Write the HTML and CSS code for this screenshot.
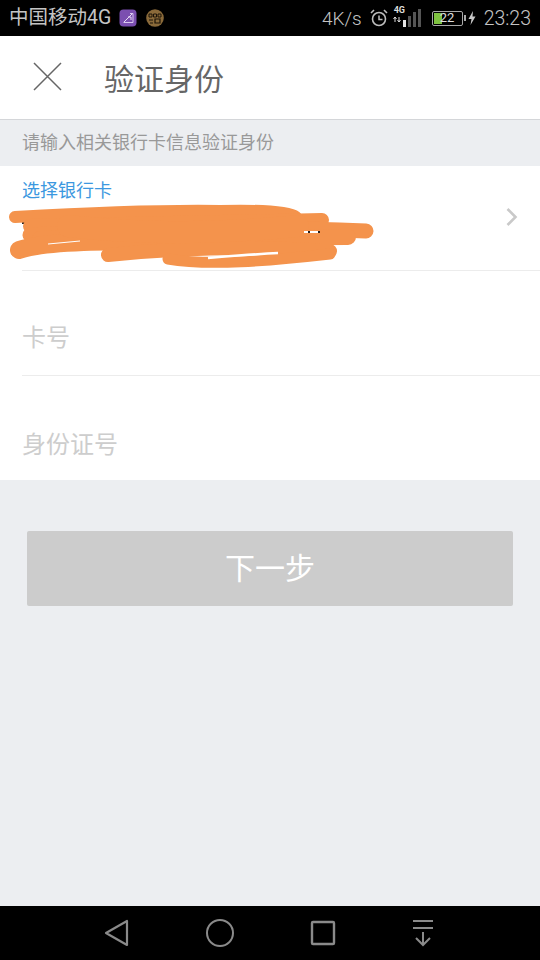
FILE: index.html
```html
<!DOCTYPE html>
<html lang="zh">
<head>
<meta charset="utf-8">
<title>验证身份</title>
<link rel="stylesheet" href="styles.css">
</head>
<body>
<div class="phone">
  <header class="status">
    <div class="status-left">
      <span class="carrier">中国移动4G</span>
      <svg class="app-icon" width="18" height="18" viewBox="0 0 18 18"><rect x="0.500" y="0.500" width="17" height="17" rx="4" fill="#7b4fb0"/><path d="M11 4.500H14V13.500H4.500" fill="none" stroke="#d9c8ee" stroke-width="1"/><path d="M5 13L13 5M9 8h3v3" fill="none" stroke="#e8dcf5" stroke-width="1"/></svg>
      <svg class="app-icon second" width="18" height="18" viewBox="0 0 18 18"><circle cx="9" cy="9" r="8.800" fill="#8a6a3a"/><path d="M3 5h3v3H3zM7.500 5h3v3h-3zM12 5h3v3h-3z" fill="none" stroke="#1d1408" stroke-width="1"/><path d="M3 11h4M9 10h5v4H9zM4 14h3" fill="none" stroke="#1d1408" stroke-width="1.200"/></svg>
    </div>
    <div class="status-right">
      <span class="speed">4K/s</span>
      <svg width="20" height="20" viewBox="0 0 20 20" class="alarm"><circle cx="10" cy="11" r="6.500" fill="none" stroke="#bdbdbd" stroke-width="1.600"/><path d="M10 7.500V11.500H13.500" fill="none" stroke="#bdbdbd" stroke-width="1.500"/><path d="M2 5L5 2M18 5L15 2" stroke="#bdbdbd" stroke-width="1.600"/></svg>
      <div class="signal">
        <span class="net">4G</span>
        <svg width="30" height="20" viewBox="0 0 30 20"><path d="M2 9L2 14M0.500 11L2 9L3.500 11M6 9V14M4.500 12L6 14L7.500 12" stroke="#ddd" stroke-width="1" fill="none"/><rect x="10" y="12" width="3" height="7" fill="#e6e6e6"/><rect x="15" y="8" width="3" height="11" fill="#555"/><rect x="20" y="4" width="3" height="15" fill="#555"/><rect x="25" y="1" width="3" height="18" fill="#555"/></svg>
      </div>
      <div class="battery">
        <span class="battery-fill"></span>
        <span class="battery-text">22</span>
      </div>
      <svg class="bolt" width="8" height="14" viewBox="0 0 8 14"><path d="M5 0L0.500 8H3.500L2.500 14L7.500 5.500H4.500Z" fill="#c8c8c8"/></svg>
      <span class="clock">23:23</span>
    </div>
  </header>

  <div class="titlebar">
    <svg class="close" width="30" height="30" viewBox="0 0 30 30"><path d="M2 2L29 29M29 2L2 29" stroke="#666" stroke-width="1.500"/></svg>
    <h1 class="title">验证身份</h1>
  </div>

  <p class="hint">请输入相关银行卡信息验证身份</p>

  <section class="form">
    <div class="row bank-row">
      <span class="bank-label">选择银行卡</span>
      <svg class="chevron" width="14" height="20" viewBox="0 0 14 20"><path d="M2.500 2L10.500 10L2.500 18" fill="none" stroke="#c9c9c9" stroke-width="2.600"/></svg>
      <svg class="scribble" width="370" height="66" viewBox="0 0 370 66"><path d="M14 19h10" stroke="#222" stroke-width="2"/><g fill="none" stroke="#f4934c" stroke-linecap="round" stroke-linejoin="round"><path d="M7 13C80 9 150 6 212 7C250 6 280 7 288 13" stroke-width="12"/><path d="M22 22L314 16" stroke-width="14"/><path d="M22 31C120 25 250 22 358 27" stroke-width="15"/><path d="M32 35L340 33" stroke-width="16"/><path d="M11 46C40 36 120 37 170 37" stroke-width="18"/><path d="M100 51C170 44 250 42 322 47" stroke-width="14"/><path d="M160 55C200 62 260 57 322 50" stroke-width="11"/><path d="M60 22C130 30 210 30 290 22" stroke-width="22"/></g><path d="M200 54C225 52 250 50 270 49" fill="none" stroke="#fff" stroke-width="2.500"/><path d="M296 28H312" stroke="#fff" stroke-width="2"/><path d="M300 28h2M310 28h2" stroke="#222" stroke-width="2"/><path d="M40 40L72 37" stroke="#fff" stroke-width="1"/></svg>
    </div>
    <div class="row"><span class="placeholder">卡号</span></div>
    <div class="row last"><span class="placeholder">身份证号</span></div>
  </section>

  <main class="content">
    <button class="next" type="button">下一步</button>
  </main>

  <nav class="navbar">
    <svg width="28" height="30" viewBox="0 0 28 30"><path d="M24 3V27L3 15Z" fill="none" stroke="#8a8a8a" stroke-width="2.200" stroke-linejoin="round"/></svg>
    <svg width="30" height="30" viewBox="0 0 30 30"><circle cx="15" cy="15" r="13" fill="none" stroke="#8a8a8a" stroke-width="2"/></svg>
    <svg width="28" height="28" viewBox="0 0 28 28"><rect x="3" y="3" width="22" height="22" rx="1" fill="none" stroke="#8a8a8a" stroke-width="2.400"/></svg>
    <svg width="24" height="28" viewBox="0 0 24 28"><path d="M2 2H22M2 9H22M12 13V26M5 19L12 26L19 19" fill="none" stroke="#8a8a8a" stroke-width="2"/></svg>
  </nav>
</div>
</body>
</html>
```

FILE: styles.css
```css
* { box-sizing: border-box; }
html, body { margin: 0; padding: 0; }
body { font-family: "Noto Sans CJK SC", "Liberation Sans", sans-serif; }
.phone { width: 540px; height: 960px; display: flex; flex-direction: column; background: #eceef1; overflow: hidden; }

.status { height: 36px; background: #000; color: #c4c4c4; display: flex; justify-content: space-between; align-items: center; padding: 0 9px 0 9px; flex: none; }
.status-left, .status-right { display: flex; align-items: center; }
.carrier { font-family: "Roboto", "Noto Sans CJK SC", sans-serif; font-size: 19.500px; line-height: 36px; font-weight: 400; }
.app-icon { margin-left: 8px; }
.app-icon.second { margin-left: 9px; }
.speed { font-family: "Roboto", sans-serif; font-size: 19px; margin-right: 7px; font-weight: 300; }
.alarm { margin-right: 4px; }
.signal { position: relative; width: 30px; height: 20px; margin-right: 9px; }
.net { position: absolute; left: 1px; top: -3px; font-family: "Roboto", sans-serif; font-size: 9px; font-weight: 700; line-height: 10px; color: #ddd; }
.signal svg { display: block; }
.battery { position: relative; width: 31px; height: 15px; border: 1.500px solid #a8a8a8; border-radius: 2px; }
.battery::after { content: ""; position: absolute; right: -4px; top: 3px; width: 2px; height: 6px; background: #a8a8a8; }
.battery-fill { position: absolute; left: 1px; top: 1px; bottom: 1px; width: 8px; background: #7fc241; }
.battery-text { position: relative; display: block; text-align: center; font-family: "Roboto", sans-serif; font-size: 13px; line-height: 12px; color: #ddd; }
.bolt { margin: 0 8px 0 5px; }
.clock { font-family: "Roboto", sans-serif; font-size: 19.500px; font-weight: 300; }

.titlebar { height: 84px; background: #fff; border-bottom: 1px solid #d4d6d9; display: flex; align-items: center; padding: 0 0 1px 32px; flex: none; }
.close { flex: none; margin-bottom: 2px; }
.title { margin: 0 0 0 42px; font-size: 30px; font-weight: 400; color: #666; line-height: 40px; }

.hint { margin: 0; height: 46px; line-height: 43px; padding-left: 22px; font-size: 18px; color: #999; flex: none; }

.form { background: #fff; flex: none; }
.row { height: 105px; margin-left: 22px; border-bottom: 1px solid #ececec; display: flex; align-items: center; padding-top: 25px; }
.row.last { border-bottom: 0; height: 104px; padding-top: 30px; }
.bank-row { position: relative; height: 105px; display: block; padding-top: 0; }
.bank-label { position: absolute; left: 0; top: 10px; font-size: 18px; line-height: 26px; color: #3c98e0; }
.chevron { position: absolute; right: 21px; top: 41px; }
.scribble { position: absolute; left: -14px; top: 38px; }
.placeholder { font-size: 24px; color: #cdcdcd; line-height: 30px; }

.content { flex: 1; padding: 51px 27px 0; }
.next { display: block; width: 100%; height: 75px; border: 0; border-radius: 2px; background: #cccccc; color: #fff; font-family: inherit; font-size: 30px; padding: 0 0 6px; }

.navbar { height: 54px; background: #000; display: flex; align-items: center; flex: none; padding: 0 105px 0 103px; justify-content: space-between; }
```
